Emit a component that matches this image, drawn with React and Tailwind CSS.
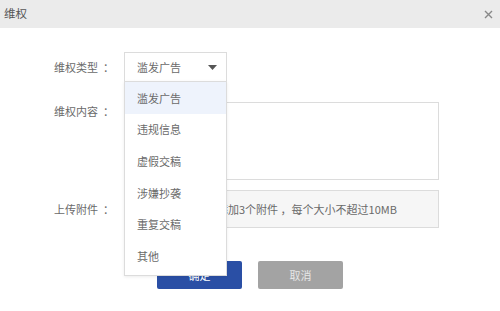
import React from "react";

const items = ["滥发广告", "违规信息", "虚假交稿", "涉嫌抄袭", "重复交稿", "其他"];

function Label({ children }) {
  return (
    <div className="ml-[54px] w-[70px] flex">
      <span>{children}</span>
      <span className="ml-[5px]">：</span>
    </div>
  );
}

export default function App() {
  return (
    <div
      className="w-[500px] h-[311px] bg-white overflow-hidden text-[11px] text-[#6a6a6a]"
      style={{ fontFamily: '"Noto Sans CJK SC", "Noto Sans", sans-serif' }}
    >
      <div className="h-[28px] bg-[#ebebeb] flex items-center justify-between pl-[4px] pr-[7px]">
        <span className="text-[11.5px] text-[#555]">维权</span>
        <svg width="9" height="9" viewBox="0 0 9 9" className="text-[#888]">
          <path d="M1 1L8 8M8 1L1 8" stroke="currentColor" strokeWidth="1.4" />
        </svg>
      </div>

      <div className="flex flex-col">
        <div className="flex items-center mt-[24px] h-[30px]">
          <Label>维权类型</Label>
          <div className="relative">
            <div className="w-[103px] h-[30px] border border-[#dcdcdc] flex items-center justify-between pl-[12px] pr-[9px]">
              <span>滥发广告</span>
              <svg width="9" height="5" viewBox="0 0 9 5">
                <path d="M0 0H9L4.5 5Z" fill="#555" />
              </svg>
            </div>
            <div className="absolute left-0 top-[29px] w-[103px] bg-white border border-[#dcdcdc] shadow-[0_1px_3px_rgba(0,0,0,0.08)] pb-[3px] z-10">
              {items.map((t, i) => (
                <div
                  key={t}
                  className={
                    "h-[31.7px] flex items-center pl-[12px] " +
                    (i === 0 ? "bg-[#eef3fc]" : "")
                  }
                >
                  {t}
                </div>
              ))}
            </div>
          </div>
        </div>

        <div className="flex mt-[20px]">
          <div className="pt-[1px]">
            <Label>维权内容</Label>
          </div>
          <div className="w-[315px] h-[78px] border border-[#dcdcdc]"></div>
        </div>

        <div className="flex items-center mt-[10px]">
          <Label>上传附件</Label>
          <div className="w-[315px] h-[38px] border border-[#dcdcdc] bg-[#f6f6f6] flex items-center pl-[4px] whitespace-nowrap text-[11px]">
            点击上传，最多可添加3个附件 ，每个大小不超过10MB
          </div>
        </div>

        <div className="flex justify-center gap-[16px] mt-[33px]">
          <button className="w-[85px] h-[28px] bg-[#2a4fa5] text-white rounded-[2px]">确定</button>
          <button className="w-[85px] h-[28px] bg-[#a3a3a3] text-[#e6e6e6] rounded-[2px]">取消</button>
        </div>
      </div>
    </div>
  );
}
